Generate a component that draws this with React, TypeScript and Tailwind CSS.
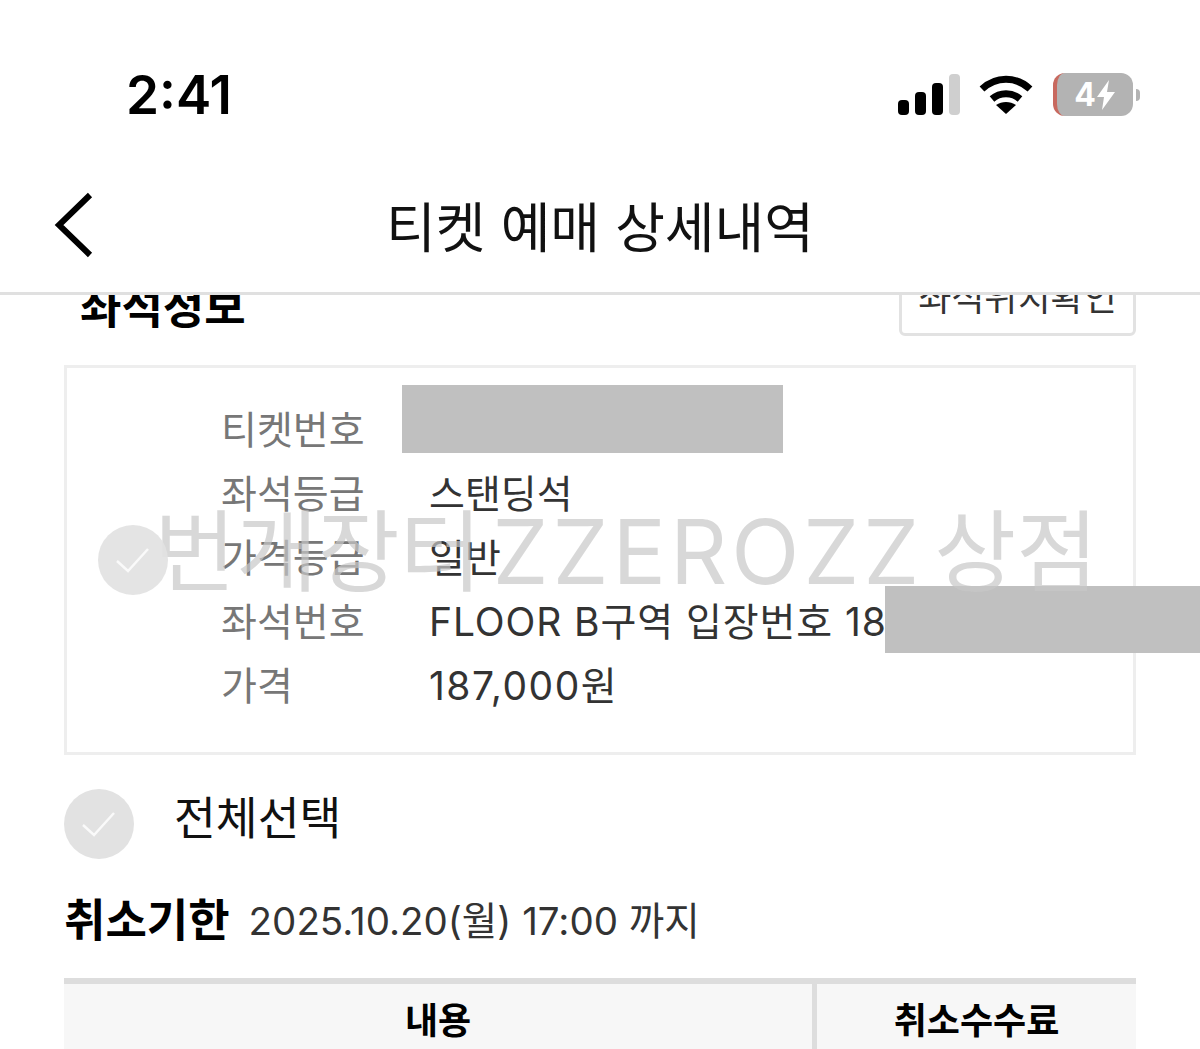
const rows = [
  { label: "티켓번호", value: "", valueClass: "" },
  { label: "좌석등급", value: "스탠딩석", valueClass: "" },
  { label: "가격등급", value: "일반", valueClass: "" },
  { label: "좌석번호", value: "FLOOR B구역 입장번호 18", valueClass: "tracking-[0.9px]" },
  { label: "가격", value: "187,000원", valueClass: "tracking-[1.5px]" },
];

const CheckCircle = ({ className }: { className: string }) => (
  <div className={`flex items-center justify-center rounded-full bg-[#e2e2e2] ${className}`}>
    <svg width="36" height="28" viewBox="0 0 36 28" fill="none" stroke="#fafafa" strokeWidth="2.5">
      <path d="M2 15l11 10L33 3" />
    </svg>
  </div>
);

export default function App() {
  return (
    <div className="relative flex h-[1049px] w-[1200px] flex-col overflow-hidden bg-white font-['Inter','Noto_Sans_CJK_KR',sans-serif] text-black">
      {/* status bar */}
      <div className="flex h-[150px] shrink-0 items-start justify-between pl-[126px] pr-[60px] pt-[63px]">
        <span className="text-[53px] leading-[64px] font-semibold">2:41</span>
        <div className="mt-[10px] flex items-center gap-[20px]">
          <svg width="62" height="42" viewBox="0 0 62 42">
            <rect x="0" y="26" width="11" height="15" rx="4" fill="#000" />
            <rect x="17" y="18" width="11" height="23" rx="4" fill="#000" />
            <rect x="34" y="9" width="11" height="32" rx="4" fill="#000" />
            <rect x="51" y="0" width="11" height="41" rx="4" fill="#cfcfcf" />
          </svg>
          <svg className="-ml-[1px]" width="54" height="40" viewBox="0 0 54 40" fill="none">
            <path d="M3 14C17 1 37 1 51 14" stroke="#000" strokeWidth="7" />
            <path d="M13 24c8-7 20-7 28 0" stroke="#000" strokeWidth="7" />
            <path d="M27 39l-10-9c6-4 14-4 20 0z" fill="#000" />
          </svg>
          <div className="flex items-center gap-[3px]">
            <div className="flex h-[43px] w-[80px] items-center justify-center overflow-hidden rounded-[12px] border-l-[4px] border-[#c8695f] bg-[#b3b3b3] text-[32px] leading-none font-bold text-white">
              <span>4</span>
              <svg width="20" height="30" viewBox="0 0 20 30" fill="#fff">
                <path d="M13 0L1 17h7L6 30 19 12h-8z" />
              </svg>
            </div>
            <div className="h-[12px] w-[4px] rounded-r-full bg-[#b3b3b3]" />
          </div>
        </div>
      </div>

      {/* nav */}
      <div className="relative z-10 flex h-[145px] shrink-0 items-start justify-center border-b-[3px] border-[#e0e0e0] bg-white pt-[43px]">
        <svg className="absolute left-[52px] top-[42px]" width="42" height="66" viewBox="0 0 42 66" fill="none" stroke="#000" strokeWidth="6">
          <path d="M38 3L7 33l31 30" />
        </svg>
        <h1 className="text-[54px] leading-[72px] font-normal text-[#111]">티켓 예매 상세내역</h1>
      </div>

      {/* scrolled content, top of the section sits under the nav */}
      <div className="relative flex-1 overflow-hidden">
        <div className="-mt-[35px] flex flex-col px-[64px]">
          <div className="flex items-center justify-between pl-[16px]">
            <h2 className="pt-[20px] text-[45px] leading-[56px] font-bold">좌석정보</h2>
            <div className="flex h-[76px] w-[237px] items-center justify-center rounded-[6px] border-[3px] border-[#e2e2e2] text-[36px] leading-none text-[#333]">
              좌석위치확인
            </div>
          </div>

          <div className="mt-[29px] flex h-[390px] w-[1072px] flex-col border-[3px] border-[#eeeeee] pl-[154px] pt-[29px]">
            {rows.map((row, i) => (
              <div key={row.label} className="flex h-[64px] items-center">
                <span className="w-[208px] shrink-0 text-[39px] leading-none text-[#777]">{row.label}</span>
                {i === 0 ? (
                  <div className="-ml-[27px] -mt-[20px] h-[68px] w-[381px] bg-[#c0c0c0]" />
                ) : (
                  <span className={`text-[39px] leading-none whitespace-nowrap text-[#333] ${row.valueClass}`}>{row.value}</span>
                )}
              </div>
            ))}
          </div>

          <div className="mt-[34px] flex items-center gap-[40px]">
            <CheckCircle className="h-[70px] w-[70px]" />
            <span className="-mt-[10px] text-[45.5px] leading-[70px] text-[#111]">전체선택</span>
          </div>

          <div className="mt-[28px] flex items-center gap-[19px]">
            <span className="text-[45px] leading-[68px] font-bold">취소기한</span>
            <span className="text-[38.5px] leading-[68px] text-[#333]">2025.10.20(월) 17:00 까지</span>
          </div>

          <div className="mt-[23px] flex h-[80px] w-[1072px] border-t-[6px] border-[#dddddd] bg-[#f7f7f7]">
            <div className="flex w-[748px] items-center justify-center text-[36px] font-bold">내용</div>
            <div className="flex flex-1 items-center justify-center border-l-[5px] border-[#dddddd] text-[36px] font-bold">취소수수료</div>
          </div>
        </div>

        {/* redaction over the seat number */}
        <div className="absolute left-[885px] top-[291px] h-[67px] w-[315px] bg-[#c0c0c0]" />

        {/* watermark */}
        <div className="absolute left-[98px] top-[223px] flex items-center">
          <CheckCircle className="h-[70px] w-[70px] opacity-90" />
          <span className="-mt-[16px] -ml-[14px] text-[89px] leading-[100px] whitespace-nowrap text-[#c8c8c8]/70 [word-spacing:-14px]">
            번개장터 <span className="tracking-[4px]">ZZEROZZ</span> 상점
          </span>
        </div>
      </div>
    </div>
  );
}
